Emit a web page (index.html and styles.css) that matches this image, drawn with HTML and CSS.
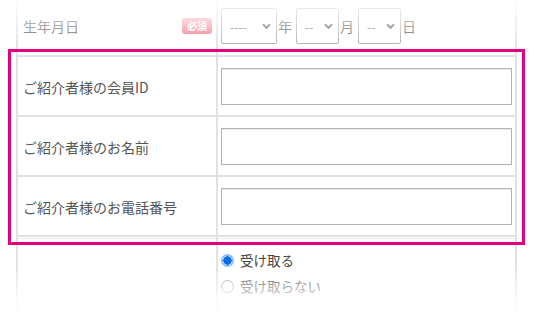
FILE: index.html
```html
<!DOCTYPE html>
<html lang="ja">
<head>
<meta charset="utf-8">
<link rel="stylesheet" href="styles.css">
</head>
<body>
<div class="frame">
  <table class="form">
    <tr class="row-birth">
      <th><div class="th-inner"><span>生年月日</span><span class="badge">必須</span></div></th>
      <td>
        <div class="dates">
          <div class="sel w-year"><span>----</span><svg class="chev" viewBox="0 0 10 6"><path d="M1 1l4 4 4-4" /></svg></div><span class="unit">年</span>
          <div class="sel w-md"><span>--</span><svg class="chev" viewBox="0 0 10 6"><path d="M1 1l4 4 4-4" /></svg></div><span class="unit">月</span>
          <div class="sel w-md"><span>--</span><svg class="chev" viewBox="0 0 10 6"><path d="M1 1l4 4 4-4" /></svg></div><span class="unit">日</span>
        </div>
      </td>
    </tr>
    <tr class="row-input">
      <th>ご紹介者様の会員ID</th>
      <td><div class="text-input"></div></td>
    </tr>
    <tr class="row-input">
      <th>ご紹介者様のお名前</th>
      <td><div class="text-input"></div></td>
    </tr>
    <tr class="row-input">
      <th>ご紹介者様のお電話番号</th>
      <td><div class="text-input"></div></td>
    </tr>
    <tr class="row-radio">
      <th></th>
      <td>
        <label class="radio"><span class="dot on"></span>受け取る</label>
        <label class="radio"><span class="dot"></span>受け取らない</label>
      </td>
    </tr>
  </table>
  <div class="highlight"></div>
  <div class="fade-top"></div>
  <div class="fade-bottom"></div>
</div>
</body>
</html>
```
FILE: styles.css
```css
html, body {
  margin: 0;
  padding: 0;
  background: #fff;
}
body {
  font-family: "Noto Sans CJK JP", "Noto Sans", sans-serif;
  color: #555;
  width: 534px;
  height: 325px;
  overflow: hidden;
}
.frame {
  position: relative;
  width: 534px;
  height: 325px;
  overflow: hidden;
}
.form {
  border-collapse: separate;
  border-spacing: 0;
  table-layout: fixed;
  width: 501px;
  margin-left: 16px;
  border-left: 2px solid #e2e2e2;
  border-right: 2px solid #e2e2e2;
}
.form th,
.form td {
  border-bottom: 2px solid #e2e2e2;
  padding: 0;
  vertical-align: middle;
  text-align: left;
}
.form th {
  width: 193px;
  padding-left: 5px;
  border-right: 2px solid #e2e2e2;
  font-weight: normal;
  font-size: 14px;
  color: #555;
}
.form td {
  width: 291px;
  padding-left: 3px;
  padding-right: 3px;
}
.row-birth th,
.row-birth td {
  padding-top: 8px;
  padding-bottom: 11px;
}
.th-inner {
  display: flex;
  align-items: center;
  justify-content: space-between;
  padding-right: 4px;
}
.badge {
  display: inline-block;
  background: linear-gradient(#f6a0ad, #ec6f84);
  color: #fff;
  font-size: 10px;
  font-weight: bold;
  line-height: 16px;
  padding: 0 5px;
  border-radius: 3px;
}
.dates {
  display: flex;
  align-items: center;
}
.sel {
  position: relative;
  box-sizing: border-box;
  height: 36px;
  border: 1px solid #aaa;
  border-radius: 2px;
  background: #fff;
  display: flex;
  align-items: center;
  padding-left: 8px;
  font-size: 12px;
  color: #666;
}
.w-year { width: 56px; }
.w-md { width: 43px; }
.sel .chev {
  position: absolute;
  right: 5px;
  top: 14px;
  width: 9px;
  height: 6px;
  fill: none;
  stroke: #555;
  stroke-width: 2.2;
}
.unit {
  font-size: 14px;
  width: 18px;
  padding-left: 1px;
  color: #555;
}
.row-input th,
.row-input td {
  padding-top: 11px;
  padding-bottom: 10px;
}
.text-input {
  box-sizing: border-box;
  width: 291px;
  height: 37px;
  border: 1px solid #b3b3b3;
  background: #fff;
  box-shadow: inset 0 1px 1px rgba(0,0,0,0.08);
}
.row-radio th,
.row-radio td {
  border-bottom: none;
  box-shadow: inset 0 1px 0 #fff, inset 0 2px 0 #e8e8e8;
  vertical-align: top;
  padding-top: 10px;
  height: 100px;
}
.row-radio td { padding-left: 3px; }
.radio {
  display: flex;
  align-items: center;
  font-size: 13.5px;
  line-height: 26px;
  color: #444;
}
.dot {
  box-sizing: border-box;
  width: 13px;
  height: 13px;
  border-radius: 50%;
  border: 1px solid #999;
  margin-right: 6px;
  background: #fff;
}
.dot.on {
  border: 2px solid #8bbcf7;
  background: radial-gradient(circle, #0a6de0 0 4px, #fff 4.5px);
}
.highlight {
  position: absolute;
  left: 8px;
  top: 49px;
  width: 517px;
  height: 196px;
  box-sizing: border-box;
  border: 3px solid #e4007f;
}
.fade-top {
  position: absolute;
  left: 0;
  top: 0;
  width: 534px;
  height: 50px;
  background: linear-gradient(rgba(255,255,255,0.9), rgba(255,255,255,0.5) 50%, rgba(255,255,255,0));
}
.fade-bottom {
  position: absolute;
  left: 0;
  bottom: 0;
  width: 534px;
  height: 60px;
  background: linear-gradient(rgba(255,255,255,0), rgba(255,255,255,0.75) 50%, #fff 80%);
}
```
